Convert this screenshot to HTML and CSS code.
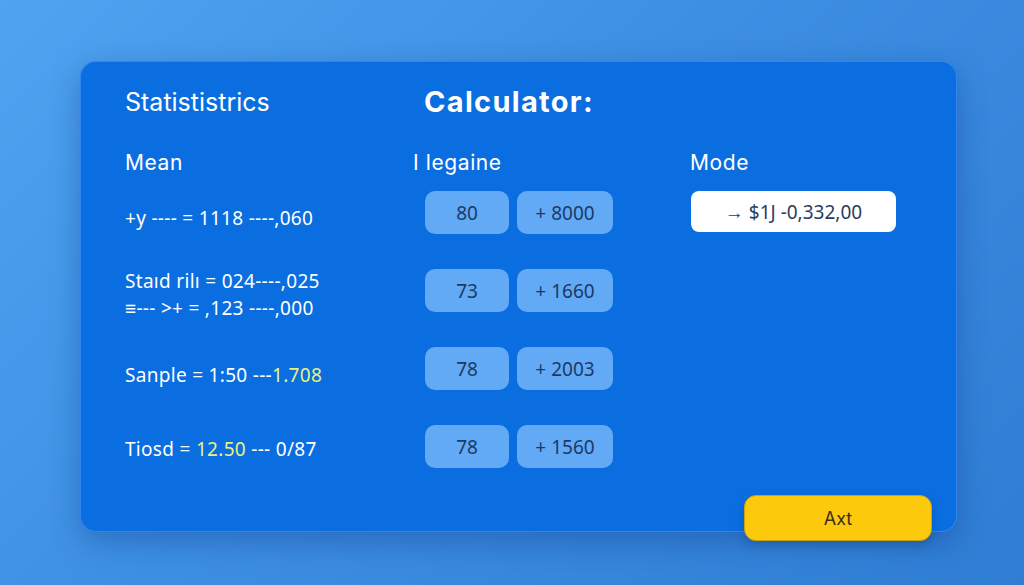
FILE: index.html
```html
<!DOCTYPE html>
<html>
<head>
<meta charset="utf-8">
<link rel="stylesheet" href="styles.css">
</head>
<body>
<div class="card">
  <div class="grid">
    <div class="col col-left">
      <h1 class="title">Statististrics</h1>
      <div class="label">Mean</div>
      <div class="line l1">+y ---- = 1118 ----,060</div>
      <div class="line l2">Staıd rilı = 024----,025</div>
      <div class="line l3">≡--- &gt;+ = ,123 ----,000</div>
      <div class="line l4">Sanple = 1:50 ---<span class="hl">1.708</span></div>
      <div class="line l5">Tiosd = <span class="hl">12.50</span> --- 0/87</div>
    </div>
    <div class="col col-mid">
      <h1 class="title bold">Calculator:</h1>
      <div class="label">I legaine</div>
      <div class="pairs">
        <div class="pair"><div class="chip a">80</div><div class="chip b">+ 8000</div></div>
        <div class="pair"><div class="chip a">73</div><div class="chip b">+ 1660</div></div>
        <div class="pair"><div class="chip a">78</div><div class="chip b">+ 2003</div></div>
        <div class="pair"><div class="chip a">78</div><div class="chip b">+ 1560</div></div>
      </div>
    </div>
    <div class="col col-right">
      <div class="title-spacer"></div>
      <div class="label">Mode</div>
      <div class="mode">→ $1J -0,332,00</div>
    </div>
  </div>
  <button class="action">Axt</button>
</div>
</body>
</html>
```
FILE: styles.css
```css
html, body {
  margin: 0;
  padding: 0;
}
body {
  width: 1024px;
  height: 585px;
  overflow: hidden;
  background: linear-gradient(135deg, #4fa3f0 0%, #3d8fe4 45%, #2f7dd4 100%);
  font-family: "Open Sans", "Noto Sans", sans-serif;
  color: #ffffff;
  padding-top: 61px;
  box-sizing: border-box;
}
.card {
  position: relative;
  margin-left: 80px;
  width: 877px;
  height: 471px;
  box-sizing: border-box;
  background: #0b6ee0;
  border-radius: 16px;
  box-shadow: 0 10px 30px rgba(10, 50, 120, 0.35), inset 0 0 0 1px rgba(120, 180, 255, 0.35);
  padding: 26px 0 0 45px;
}
.grid {
  display: grid;
  grid-template-columns: 288px 277px 1fr;
}
.col {
  display: flex;
  flex-direction: column;
}
.title {
  margin: 0;
  font-family: "Inter", "Open Sans", sans-serif;
  font-weight: 400;
  font-size: 25px;
  line-height: 30px;
  height: 30px;
  letter-spacing: 0px;
  white-space: nowrap;
}
.title.bold {
  font-weight: 700;
  font-size: 29px;
  padding-left: 11px;
  letter-spacing: 1.3px;
}
.title-spacer {
  height: 30px;
}
.label {
  margin-top: 33px;
  font-family: "Inter", "Open Sans", sans-serif;
  font-size: 21px;
  line-height: 26px;
  height: 26px;
  letter-spacing: 0.6px;
  white-space: nowrap;
}
.line {
  font-family: "Noto Sans", "Open Sans", sans-serif;
  font-size: 19px;
  line-height: 24px;
  white-space: nowrap;
  letter-spacing: 0.3px;
}
.l1 { margin-top: 30px; }
.l2 { margin-top: 39px; }
.l3 { margin-top: 3px; }
.l4 { margin-top: 43px; }
.l5 { margin-top: 50px; }
.hl { color: #e9f27a; }
.pairs {
  margin-top: 15px;
  padding-left: 12px;
  display: flex;
  flex-direction: column;
  gap: 35px;
}
.pair {
  display: flex;
  gap: 8px;
}
.chip {
  height: 43px;
  border-radius: 10px;
  background: #62a9f6;
  color: #1b3a66;
  font-family: "Noto Sans", "Open Sans", sans-serif;
  font-size: 19px;
  display: flex;
  align-items: center;
  justify-content: center;
}
.chip.a { width: 84px; }
.chip.b { width: 96px; }
.mode {
  margin-top: 15px;
  width: 205px;
  height: 41px;
  margin-left: 1px;
  border-radius: 8px;
  background: #ffffff;
  color: #2a3d5e;
  font-family: "Noto Sans", "Open Sans", sans-serif;
  font-size: 19px;
  display: flex;
  align-items: center;
  justify-content: center;
  white-space: nowrap;
}
.action {
  position: absolute;
  right: 25px;
  bottom: -9px;
  width: 188px;
  height: 46px;
  border: 1px solid #c9a20a;
  border-radius: 12px;
  background: #fdc90c;
  color: #3b2f10;
  font-family: "Inter", "Open Sans", sans-serif;
  font-size: 18px;
  box-shadow: 0 4px 10px rgba(10, 40, 100, 0.25);
}
```
